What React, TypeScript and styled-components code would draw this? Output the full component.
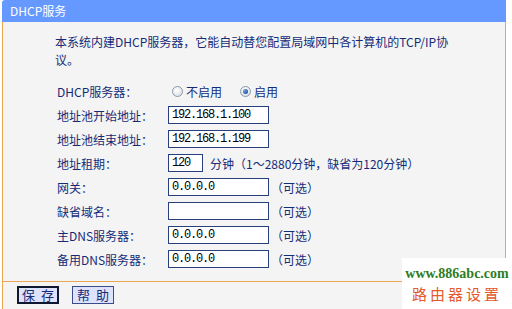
import styled, { createGlobalStyle } from 'styled-components'

const GlobalStyle = createGlobalStyle`
  html, body {
    margin: 0;
    padding: 0;
    background: #ffffff;
  }
  body {
    font-family: "Noto Sans CJK SC", "DejaVu Sans", sans-serif;
    font-size: 12px;
    color: #142c78;
  }
`

const Page = styled.div`
  position: relative;
  width: 512px;
  height: 309px;
  overflow: hidden;
`

const Panel = styled.div`
  margin-left: 2px;
  width: 504px;
  height: 309px;
  display: flex;
  flex-direction: column;
`

const Header = styled.div`
  height: 22px;
  background: #6699ff;
  border-top-left-radius: 3px;
  color: #ffffff;
  font-size: 12px;
  line-height: 22px;
  padding-left: 8px;
`

const Body = styled.div`
  background: #f4f4f4;
  border-left: 1px solid #eaa653;
  border-right: 1px solid #eaa653;
  padding: 11px 0 10px 52px;
`

const Intro = styled.p`
  margin: 0;
  width: 398px;
  line-height: 18px;
  font-size: 12px;
  word-break: break-all;
`

const Form = styled.div`
  margin-top: 10px;
  margin-left: 2px;
  display: grid;
  grid-template-columns: 111px 1fr;
  grid-auto-rows: 24px;
  align-items: center;
`

const Label = styled.div`
  font-size: 12px;
  white-space: nowrap;
`

const Field = styled.div`
  display: flex;
  align-items: center;
  white-space: nowrap;
`

const TextBox = styled.div<{ $w: number }>`
  box-sizing: border-box;
  width: ${(p) => p.$w}px;
  height: 18px;
  background: #ffffff;
  border: 1px solid #28407e;
  padding-left: 3px;
  font-family: "Liberation Mono", monospace;
  font-size: 12px;
  letter-spacing: -1.2px;
  line-height: 16px;
  color: #000000;
`

const Hint = styled.span<{ $gap: number }>`
  margin-left: ${(p) => p.$gap}px;
  font-size: 12px;
`

const RadioOption = styled.label`
  display: inline-flex;
  align-items: center;
  margin-right: 14px;
  margin-left: 4px;
`

const RadioDot = styled.span<{ $on?: boolean }>`
  box-sizing: border-box;
  width: 11px;
  height: 11px;
  margin-right: 3px;
  border-radius: 50%;
  border: 1px solid #8b98a8;
  background: radial-gradient(circle at 40% 35%, #ffffff 0%, #dfe3e8 75%);
  display: inline-flex;
  align-items: center;
  justify-content: center;

  &::after {
    content: '';
    display: ${(p) => (p.$on ? 'block' : 'none')};
    width: 5px;
    height: 5px;
    border-radius: 50%;
    background: radial-gradient(circle at 35% 35%, #6fa0e0 0%, #1d4f9e 80%);
  }
`

const Footer = styled.div`
  flex: 1;
  background: #f4f4f4;
  border-left: 1px solid #eaa653;
  border-top: 1px solid #eaa653;
  display: flex;
  align-items: flex-start;
  gap: 13px;
  padding: 4px 0 0 14px;
`

const Button = styled.button<{ $primary?: boolean }>`
  box-sizing: border-box;
  width: 42px;
  height: 18px;
  padding: 0 0 0 ${(p) => (p.$primary ? 3 : 4)}px;
  text-align: left;
  background: #dfe2fc;
  border: ${(p) => (p.$primary ? '2px solid #101830' : '1px solid #3a4c8c')};
  color: #142c78;
  font-family: "Noto Sans CJK SC", sans-serif;
  font-size: 13px;
  line-height: 14px;
  letter-spacing: 6px;
  white-space: nowrap;
  overflow: hidden;
`

const Watermark = styled.div`
  position: absolute;
  right: 0;
  bottom: 0;
  width: 110px;
  height: 51px;
  background: #ffffff;
  display: flex;
  flex-direction: column;
  align-items: center;
  padding-top: 7px;
  box-sizing: border-box;
`

const SiteUrl = styled.div`
  font-family: "Liberation Serif", serif;
  font-weight: bold;
  font-size: 14px;
  line-height: 18px;
  color: #2f7d23;
`

const SiteName = styled.div`
  margin-top: 2px;
  font-family: "Noto Sans CJK SC", sans-serif;
  font-size: 15px;
  line-height: 18px;
  letter-spacing: 3px;
  color: #e35a2e;
`

const rows: { label: string; value?: string; width?: number; hint?: string }[] = [
  { label: '地址池开始地址：', value: '192.168.1.100', width: 101 },
  { label: '地址池结束地址：', value: '192.168.1.199', width: 101 },
  { label: '地址租期：', value: '120', width: 35, hint: '分钟（1～2880分钟，缺省为120分钟）' },
  { label: '网关：', value: '0.0.0.0', width: 101, hint: '（可选）' },
  { label: '缺省域名：', value: '', width: 101, hint: '（可选）' },
  { label: '主DNS服务器：', value: '0.0.0.0', width: 101, hint: '（可选）' },
  { label: '备用DNS服务器：', value: '0.0.0.0', width: 101, hint: '（可选）' },
]

export default function App() {
  return (
    <Page>
      <GlobalStyle />
      <Panel>
        <Header>DHCP服务</Header>
        <Body>
          <Intro>本系统内建DHCP服务器，它能自动替您配置局域网中各计算机的TCP/IP协议。</Intro>
          <Form>
            <Label>DHCP服务器：</Label>
            <Field>
              <RadioOption>
                <RadioDot />
                不启用
              </RadioOption>
              <RadioOption>
                <RadioDot $on />
                启用
              </RadioOption>
            </Field>
            {rows.map((r) => (
              <>
                <Label key={`${r.label}-l`}>{r.label}</Label>
                <Field key={`${r.label}-f`}>
                  <TextBox $w={r.width ?? 101}>{r.value}</TextBox>
                  {r.hint && <Hint $gap={r.width === 35 ? 7 : 2}>{r.hint}</Hint>}
                </Field>
              </>
            ))}
          </Form>
        </Body>
        <Footer>
          <Button $primary>保存</Button>
          <Button>帮助</Button>
        </Footer>
      </Panel>
      <Watermark>
        <SiteUrl>www.886abc.com</SiteUrl>
        <SiteName>路由器设置</SiteName>
      </Watermark>
    </Page>
  )
}
